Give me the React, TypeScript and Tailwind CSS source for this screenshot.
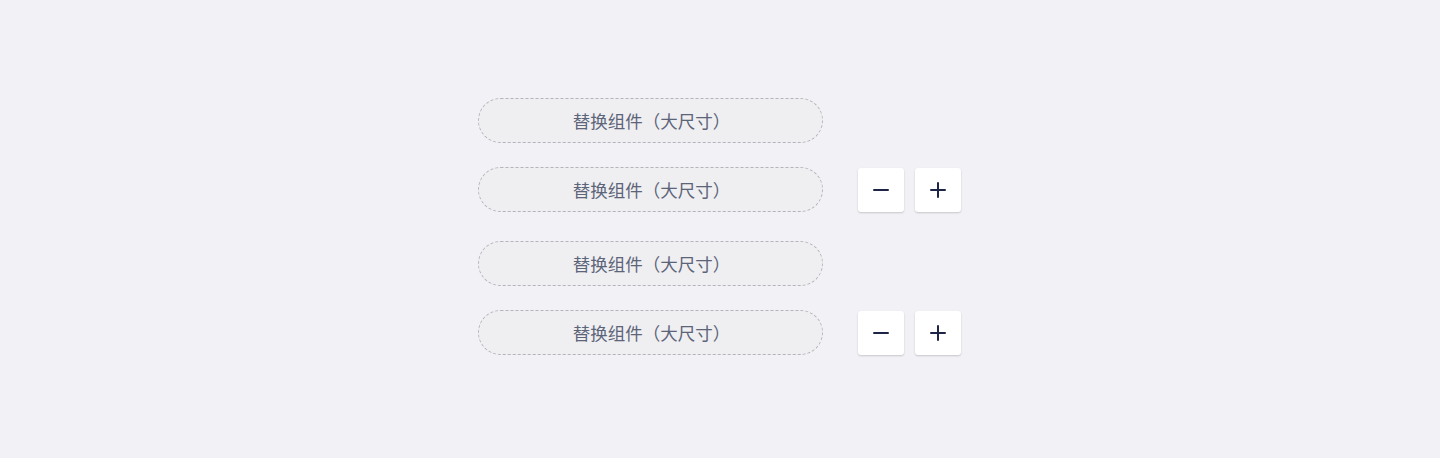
import { Minus, Plus } from "lucide-react";

function Placeholder() {
    return (
        <div className="w-[345px] h-[45px] rounded-full border border-dashed border-[#b4b4bc] bg-[#efeff1] flex items-center justify-center">
            <span className="text-[17.5px] text-[#5c6479] font-['Noto_Sans_CJK_SC',sans-serif] leading-none pl-[2px]">
                替换组件（大尺寸）
            </span>
        </div>
    );
}

function Stepper() {
    return (
        <div className="flex self-end gap-[11px] ml-[35px]">
            <button className="w-[46px] h-[44px] bg-white rounded-[3px] shadow-[0_1px_2px_rgba(0,0,0,0.18)] flex items-center justify-center text-[#1e2446]">
                <Minus size={24} strokeWidth={2} />
            </button>
            <button className="w-[46px] h-[44px] bg-white rounded-[3px] shadow-[0_1px_2px_rgba(0,0,0,0.18)] flex items-center justify-center text-[#1e2446]">
                <Plus size={24} strokeWidth={2} />
            </button>
        </div>
    );
}

function Group() {
    return (
        <div className="flex flex-col gap-6">
            <div className="flex items-center">
                <Placeholder />
            </div>
            <div className="flex items-center">
                <Placeholder />
                <Stepper />
            </div>
        </div>
    );
}

export default function App() {
    return (
        <div className="w-full h-[458px] bg-[#f2f2f6] flex justify-center pt-[98px]">
            <div className="flex flex-col gap-[29px] w-[484px]">
                <Group />
                <Group />
            </div>
        </div>
    );
}
